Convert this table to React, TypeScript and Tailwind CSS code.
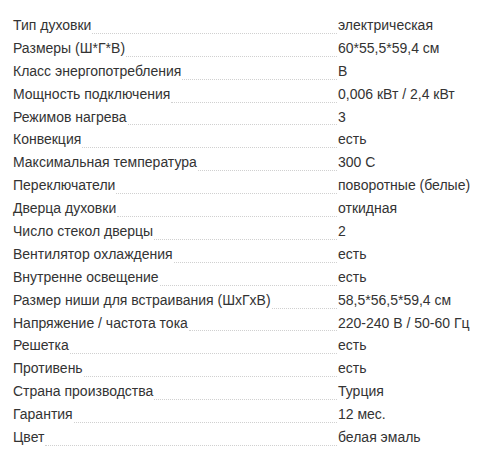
import React from "react";

const rows: [string, string][] = [
  ["Тип духовки", "электрическая"],
  ["Размеры (Ш*Г*В)", "60*55,5*59,4 см"],
  ["Класс энергопотребления", "B"],
  ["Мощность подключения", "0,006 кВт / 2,4 кВт"],
  ["Режимов нагрева", "3"],
  ["Конвекция", "есть"],
  ["Максимальная температура", "300 С"],
  ["Переключатели", "поворотные (белые)"],
  ["Дверца духовки", "откидная"],
  ["Число стекол дверцы", "2"],
  ["Вентилятор охлаждения", "есть"],
  ["Внутренне освещение", "есть"],
  ["Размер ниши для встраивания (ШхГхВ)", "58,5*56,5*59,4 см"],
  ["Напряжение / частота тока", "220-240 В / 50-60 Гц"],
  ["Решетка", "есть"],
  ["Противень", "есть"],
  ["Страна производства", "Турция"],
  ["Гарантия", "12 мес."],
  ["Цвет", "белая эмаль"],
];

export default function App() {
  return (
    <div
      className="w-[500px] h-[465px] bg-white pt-[14px] pl-[13px] text-[14px] text-[#333]"
      style={{ fontFamily: '"Liberation Sans", Arial, sans-serif' }}
    >
      {rows.map(([k, v]) => (
        <div key={k} className="flex h-[22.9px] items-center leading-[22.9px]">
          <span className="whitespace-nowrap">{k}</span>
          <span className="flex-1 self-end mb-[3px] ml-[1px] border-b border-dotted border-[#d0d0d0]" />
          <span className="w-[163px] pl-[1px] whitespace-nowrap">{v}</span>
        </div>
      ))}
    </div>
  );
}
